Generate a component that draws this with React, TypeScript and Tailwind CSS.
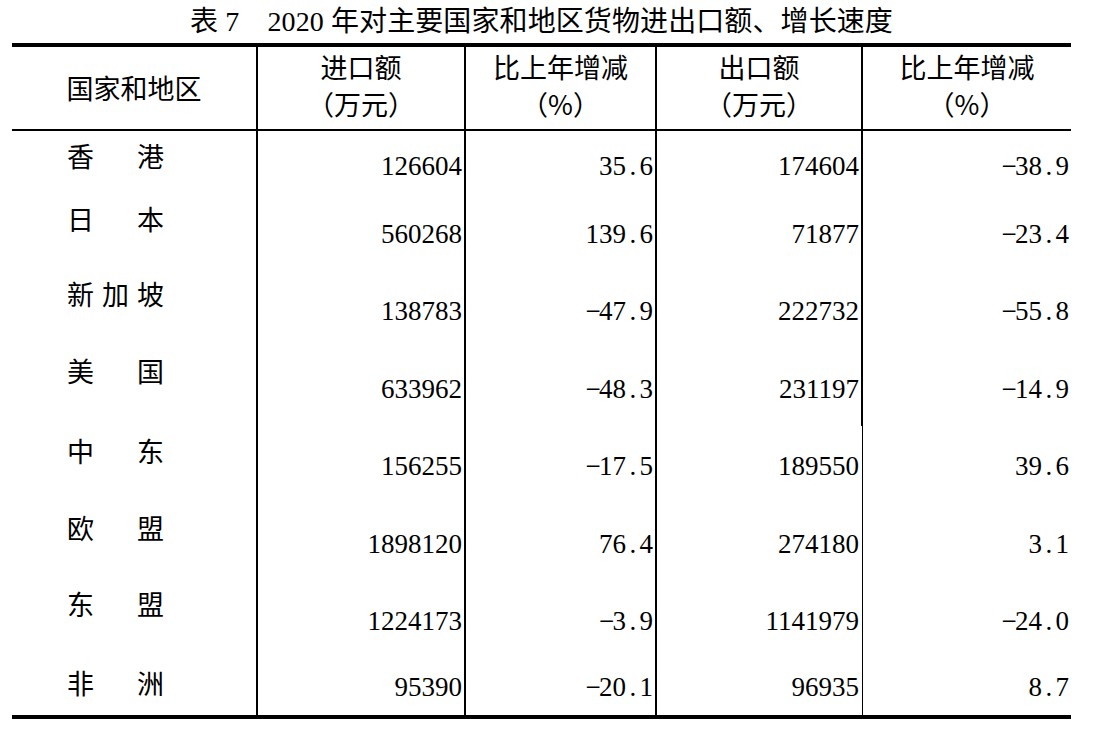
import React from "react";

type Row = {
  name: string;
  vals: string[];
  h: string;
  pt: string;
  thin: boolean;
};

const rows: Row[] = [
  { name: "香　港", vals: ["126604", "35.6", "174604", "-38.9"], h: "h-[63px]", pt: "pt-[22px]", thin: false },
  { name: "日　本", vals: ["560268", "139.6", "71877", "-23.4"], h: "h-[75px]", pt: "pt-[27px]", thin: false },
  { name: "新加坡", vals: ["138783", "-47.9", "222732", "-55.8"], h: "h-[77px]", pt: "pt-[29px]", thin: false },
  { name: "美　国", vals: ["633962", "-48.3", "231197", "-14.9"], h: "h-[80px]", pt: "pt-[30px]", thin: false },
  { name: "中　东", vals: ["156255", "-17.5", "189550", "39.6"], h: "h-[77px]", pt: "pt-[27px]", thin: true },
  { name: "欧　盟", vals: ["1898120", "76.4", "274180", "3.1"], h: "h-[76px]", pt: "pt-[28px]", thin: true },
  { name: "东　盟", vals: ["1224173", "-3.9", "1141979", "-24.0"], h: "h-[79px]", pt: "pt-[29px]", thin: true },
  { name: "非　洲", vals: ["95390", "-20.1", "96935", "8.7"], h: "h-[57px]", pt: "pt-[16px]", thin: true },
];

const cjk = "font-['Noto_Sans_CJK_SC',sans-serif]";
const num = "font-['Liberation_Serif',serif]";

function Num({ v }: { v: string }) {
  return (
    <span className="whitespace-nowrap">
      {v.split("").map((c, i) => {
        if (c === ".") {
          return (
            <span key={i} className="inline-block w-[0.5em] text-center">
              .
            </span>
          );
        }
        if (c === "-") {
          return (
            <span key={i} className="inline-block w-[0.5em] text-center">
              −
            </span>
          );
        }
        return <span key={i}>{c}</span>;
      })}
    </span>
  );
}

function HeadCell({ l1, l2, last }: { l1: string; l2: string; last?: boolean }) {
  return (
    <div
      className={`flex flex-col items-center pt-[6px] ${last ? "" : "border-r-2 border-black"}`}
    >
      <div className="h-[27px] leading-[27px]">{l1}</div>
      <div className="mt-[10px] h-[27px] leading-[27px]">{l2}</div>
    </div>
  );
}

export default function App() {
  return (
    <div className="w-[1100px] h-[730px] bg-white text-black overflow-hidden">
      <div className="ml-[12px] w-[1059px] pt-[8px] h-[36px] text-center text-[28px] leading-[28px] tracking-[0.1px] font-['Liberation_Serif','Noto_Sans_CJK_SC',serif] whitespace-pre">
        表 7　2020 年对主要国家和地区货物进出口额、增长速度
      </div>
      <div className="ml-[12px] mt-[7px] w-[1059px] border-t-4 border-b-4 border-black text-[27px]">
        <div
          className={`grid grid-cols-[246px_208px_191px_206px_208px] h-[84px] border-b-2 border-black ${cjk}`}
        >
          <div className="flex items-center justify-center border-r-2 border-black pb-[2px] leading-[27px]">
            国家和地区
          </div>
          <HeadCell l1="进口额" l2="（万元）" />
          <HeadCell l1="比上年增减" l2="（%）" />
          <HeadCell l1="出口额" l2="（万元）" />
          <HeadCell l1="比上年增减" l2="（%）" last />
        </div>
        {rows.map((r) => (
          <div key={r.name} className={`grid grid-cols-[246px_208px_191px_206px_208px] ${r.h}`}>
            <div className={`border-r-2 border-black pl-[55px] pt-[11px] leading-[27px] tracking-[8px] whitespace-pre ${cjk}`}>
              {r.name}
            </div>
            {r.vals.map((v, i) => (
              <div
                key={i}
                className={`text-right leading-[27px] ${num} ${r.pt} ${
                  i === 3
                    ? "pr-[2px]"
                    : i === 2 && r.thin
                    ? "border-r border-black pr-[3px]"
                    : "border-r-2 border-black pr-[2px]"
                }`}
              >
                <Num v={v} />
              </div>
            ))}
          </div>
        ))}
      </div>
    </div>
  );
}
